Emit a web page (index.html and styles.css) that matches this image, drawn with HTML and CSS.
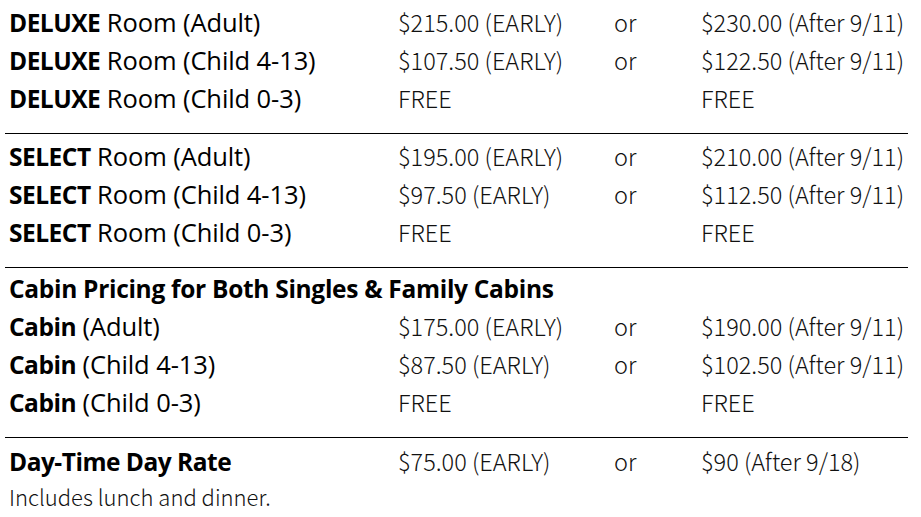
FILE: index.html
```html
<!DOCTYPE html>
<html>
<head>
<meta charset="utf-8">
<link rel="stylesheet" href="styles.css">
</head>
<body>
<div class="table">
  <div class="group">
    <div class="row"><div class="label"><b>DELUXE</b> Room (Adult)</div><div class="price">$215.00 (EARLY)</div><div class="or">or</div><div class="after">$230.00 (After 9/11)</div></div>
    <div class="row"><div class="label"><b>DELUXE</b> Room (Child 4-13)</div><div class="price">$107.50 (EARLY)</div><div class="or">or</div><div class="after">$122.50 (After 9/11)</div></div>
    <div class="row"><div class="label"><b>DELUXE</b> Room (Child 0-3)</div><div class="price">FREE</div><div class="or"></div><div class="after">FREE</div></div>
  </div>
  <div class="group">
    <div class="row"><div class="label"><b>SELECT</b> Room (Adult)</div><div class="price">$195.00 (EARLY)</div><div class="or">or</div><div class="after">$210.00 (After 9/11)</div></div>
    <div class="row"><div class="label"><b>SELECT</b> Room (Child 4-13)</div><div class="price">$97.50 (EARLY)</div><div class="or">or</div><div class="after">$112.50 (After 9/11)</div></div>
    <div class="row"><div class="label"><b>SELECT</b> Room (Child 0-3)</div><div class="price">FREE</div><div class="or"></div><div class="after">FREE</div></div>
  </div>
  <div class="group">
    <div class="heading">Cabin Pricing for Both Singles &amp; Family Cabins</div>
    <div class="row"><div class="label"><b>Cabin</b> (Adult)</div><div class="price">$175.00 (EARLY)</div><div class="or">or</div><div class="after">$190.00 (After 9/11)</div></div>
    <div class="row"><div class="label"><b>Cabin</b> (Child 4-13)</div><div class="price">$87.50 (EARLY)</div><div class="or">or</div><div class="after">$102.50 (After 9/11)</div></div>
    <div class="row"><div class="label"><b>Cabin</b> (Child 0-3)</div><div class="price">FREE</div><div class="or"></div><div class="after">FREE</div></div>
  </div>
  <div class="group last">
    <div class="row"><div class="label"><b>Day-Time Day Rate</b></div><div class="price">$75.00 (EARLY)</div><div class="or">or</div><div class="after">$90 (After 9/18)</div></div>
    <div class="note">Includes lunch and dinner.</div>
  </div>
</div>
</body>
</html>
```

FILE: styles.css
```css
html, body {
  margin: 0;
  padding: 0;
  background: #fff;
}
body {
  color: #000;
  font-family: "Open Sans", "Noto Sans", sans-serif;
}
.table {
  width: 903px;
  margin-left: 5px;
}
.group {
  padding: 3px 0 16px 4px;
  border-bottom: 1px solid #000;
}
.group.last {
  border-bottom: none;
  padding-top: 4px;
  padding-bottom: 0;
}
.row {
  display: flex;
  align-items: center;
  height: 38px;
}
.label {
  width: 389px;
  font-size: 25.5px;
  letter-spacing: -0.1px;
  white-space: nowrap;
}
.label b {
  font-weight: 700;
  font-size: 24.5px;
  letter-spacing: -0.5px;
}
.heading {
  font-weight: 700;
  height: 36px;
  line-height: 36px;
  font-size: 24.5px;
  letter-spacing: -0.3px;
  white-space: nowrap;
}
.price, .or, .after {
  font-family: "Noto Sans CJK JP", "Noto Sans", sans-serif;
  font-weight: 300;
  font-size: 23.5px;
  color: #111;
  white-space: nowrap;
}
.price { width: 216px; }
.or { width: 87px; }
.after { flex: 1; }
.note {
  font-family: "Noto Sans CJK JP", "Noto Sans", sans-serif;
  font-weight: 300;
  font-size: 22px;
  line-height: 32px;
  color: #111;
}
```
